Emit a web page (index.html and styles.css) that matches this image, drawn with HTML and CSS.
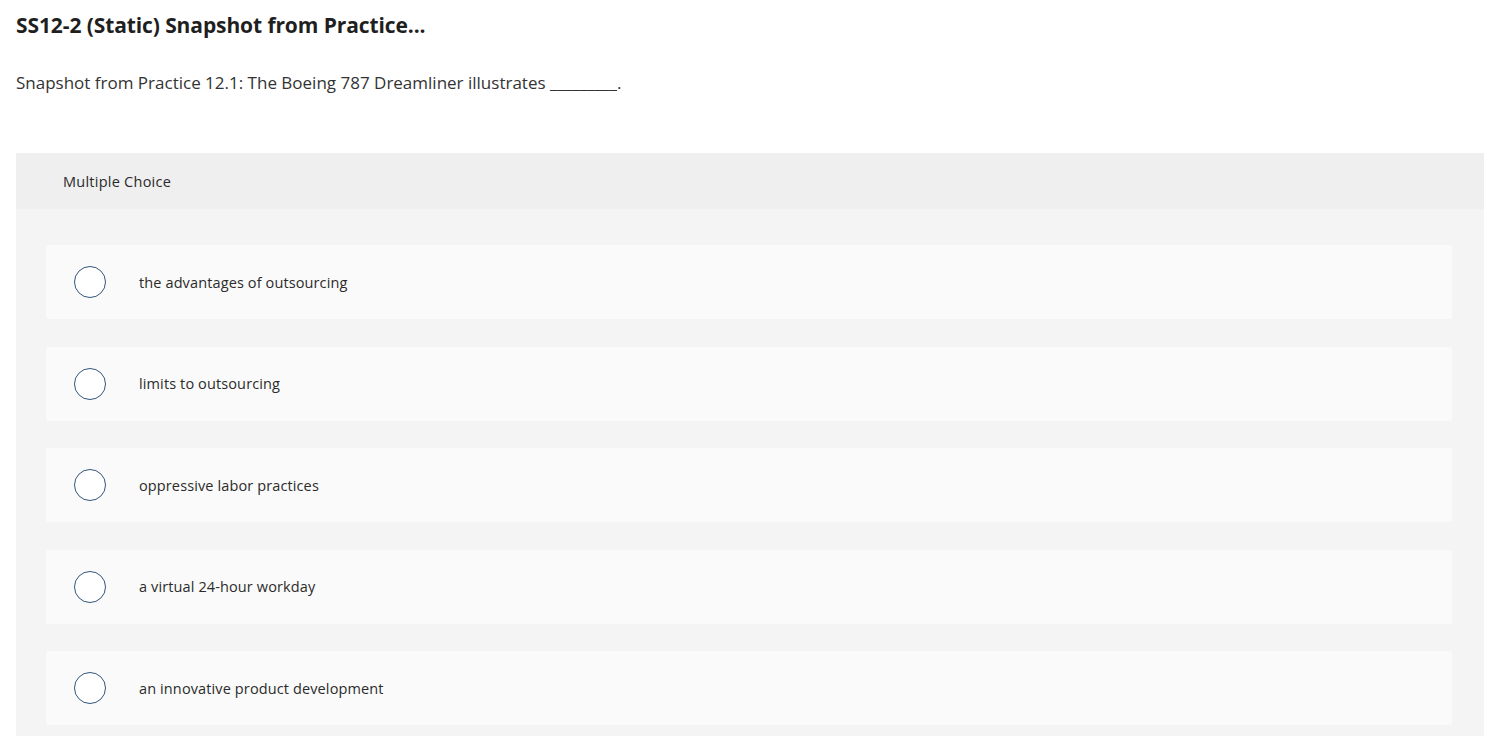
FILE: index.html
```html
<!DOCTYPE html>
<html lang="en">
<head>
<meta charset="utf-8">
<title>SS12-2 (Static) Snapshot from Practice...</title>
<link rel="stylesheet" href="styles.css">
</head>
<body>
<main class="page">
  <h1 class="title">SS12-2 (Static) Snapshot from Practice...</h1>
  <p class="prompt">Snapshot from Practice 12.1: The Boeing 787 Dreamliner illustrates _________.</p>
  <section class="card">
    <div class="card-head">Multiple Choice</div>
    <div class="card-body">
      <label class="option"><span class="radio"></span><span class="opt-text">the advantages of outsourcing</span></label>
      <label class="option"><span class="radio"></span><span class="opt-text">limits to outsourcing</span></label>
      <label class="option"><span class="radio"></span><span class="opt-text">oppressive labor practices</span></label>
      <label class="option"><span class="radio"></span><span class="opt-text">a virtual 24-hour workday</span></label>
      <label class="option"><span class="radio"></span><span class="opt-text">an innovative product development</span></label>
    </div>
  </section>
</main>
</body>
</html>
```
FILE: styles.css
```css
* { box-sizing: border-box; }
html, body { margin: 0; padding: 0; background: #fff; }
body {
  font-family: "Open Sans", "Liberation Sans", sans-serif;
  color: #333;
}
.page {
  padding: 11px 20px 0 16px;
}
.title {
  margin: 0;
  font-size: 21px;
  font-weight: 700;
  color: #1f1f1f;
  line-height: 28px;
  letter-spacing: -0.1px;
}
.prompt {
  margin: 33px 0 0 0;
  font-size: 17px;
  line-height: 22px;
  color: #333;
}
.card {
  margin-top: 59px;
  width: 1468px;
  background: #f4f4f4;
}
.card-head {
  height: 56px;
  background: #efefef;
  padding-left: 47px;
  display: flex;
  align-items: center;
  font-size: 14.5px;
  letter-spacing: 0.25px;
  color: #2a2a2a;
}
.card-body {
  padding: 36px 32px 11px 30px;
  display: flex;
  flex-direction: column;
  gap: 27.5px;
}
.option {
  height: 74px;
  background: #fafafa;
  border-radius: 3px;
  display: flex;
  align-items: center;
  padding-left: 28px;
}
.radio {
  width: 32px;
  height: 32px;
  border: 1.2px solid #34557a;
  border-radius: 50%;
  background: #fff;
  flex: none;
}
.opt-text {
  margin-left: 33px;
  font-size: 14.5px;
  letter-spacing: 0.12px;
  color: #2b2b2b;
}
```
